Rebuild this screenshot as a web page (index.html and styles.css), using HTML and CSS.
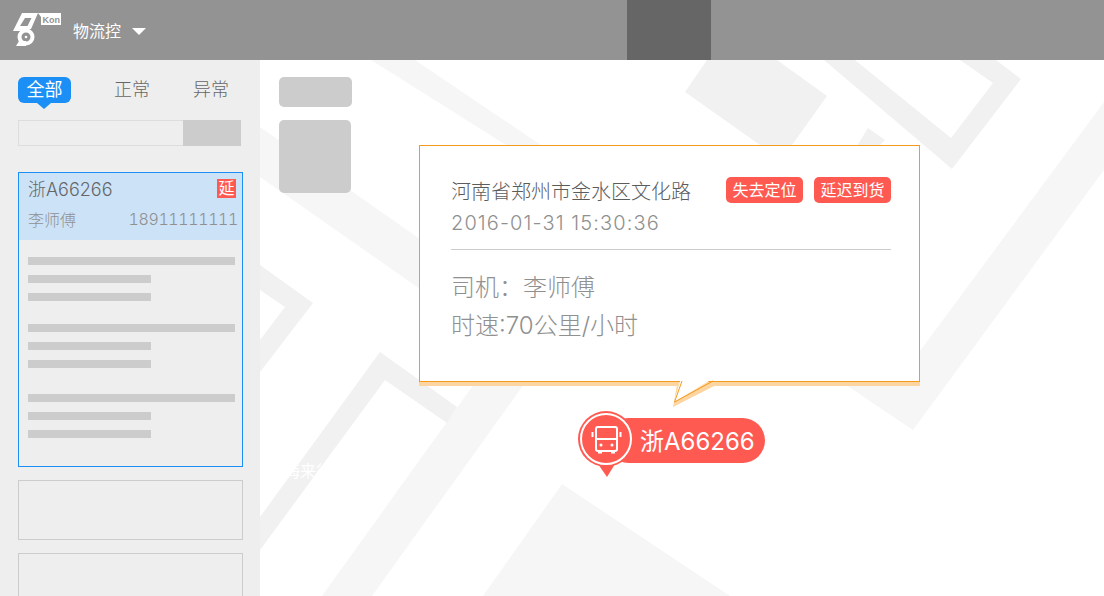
FILE: index.html
```html
<!DOCTYPE html>
<html lang="zh-CN">
<head>
  <meta charset="UTF-8">
  <title>物流控</title>
  <link rel="stylesheet" href="styles.css">
</head>
<body>
  <!-- Top bar -->
  <header class="topbar">
    <svg class="logo" viewBox="0 0 62 60" width="62" height="60">
      <path class="logo-mark" d="M22 13H38L31 29H26L31.500 18H25L20 26H28L25.500 31H13Z"/>
      <circle class="logo-ring" cx="26" cy="37" r="6.500"/>
      <circle class="logo-dot" cx="26" cy="37" r="1.300"/>
      <path class="logo-mark" d="M19 41H26V46H16Z"/>
      <path class="logo-mark" d="M38 13H61V25H41V17Z"/>
      <text class="logo-tag" x="42.500" y="22.500">Kon</text>
    </svg>
    <div class="brand">物流控</div>
    <span class="caret"></span>
    <div class="topbar-block"></div>
  </header>

  <div class="main">
    <aside class="sidebar">
      <nav class="tabs">
        <a class="tab active">全部</a>
        <a class="tab">正常</a>
        <a class="tab">异常</a>
      </nav>
      <div class="search">
        <div class="search-input"></div>
        <div class="search-btn"></div>
      </div>

      <div class="truck-card selected">
        <div class="truck-head">
          <div class="truck-row">
            <span class="plate">浙A66266</span>
            <span class="late-badge">延</span>
          </div>
          <div class="truck-row">
            <span class="driver">李师傅</span>
            <span class="phone">18911111111</span>
          </div>
        </div>
        <div class="truck-body">
          <div class="bar-group">
            <div class="bar"></div>
            <div class="bar short"></div>
            <div class="bar short"></div>
          </div>
          <div class="bar-group">
            <div class="bar"></div>
            <div class="bar short"></div>
            <div class="bar short"></div>
          </div>
          <div class="bar-group">
            <div class="bar"></div>
            <div class="bar short"></div>
            <div class="bar short"></div>
          </div>
        </div>
      </div>
      <div class="truck-card empty"></div>
      <div class="truck-card empty"></div>
    </aside>

    <section class="map">
      <!-- Map background, page coordinates -->
      <svg class="map-roads" viewBox="260 60 844 536">
        <polygon class="road-soft" points="371,60 415,60 800,320 900,384 845,384 913,430 800,330"/>
        <polygon class="road-soft" points="260,127 520,309 520,359 260,177"/>
        <polygon class="road-soft" points="477,380 527,380 372,596 322,596"/>
        <polygon class="road-soft" points="562,484 730,596 483,596"/>
        <polygon class="road-soft" points="1104,102 1104,170 913,430 845,384 900,384 920,351"/>
        <polygon class="road" points="685,92 707,60 777,60 827,96 792,145 760,145"/>
        <polygon class="road" points="824,60 855,60 951,138 993,83 960,60 996,60 1021,79 952,169"/>
        <polygon class="road" points="868,128 885,140 873,152 857,146"/>
        <polygon class="road" points="260,517 380,352 457,407 447,423 385,380 260,550"/>
        <polygon class="road" points="260,265 313,303 260,372 260,340 285,307 260,290"/>
      </svg>
      <div class="map-label">海来往</div>

      <div class="map-tools">
        <div class="tool-wide"></div>
        <div class="tool-square"></div>
      </div>

      <div class="popup">
        <div class="popup-head">
          <div class="address">河南省郑州市金水区文化路</div>
          <div class="tags">
            <span class="tag">失去定位</span>
            <span class="tag">延迟到货</span>
          </div>
        </div>
        <div class="time">2016-01-31 15:30:36</div>
        <div class="divider"></div>
        <div class="info">司机：李师傅</div>
        <div class="info">时速:70公里/小时</div>
        <svg class="popup-tail" viewBox="660 375 70 40">
          <polygon class="tail-shadow" points="677,385 673,407 716,385"/>
          <polygon class="tail-fill" points="681,378 674,402 714,378"/>
          <polyline class="tail-line" points="682,381 674.500,402 713,381"/>
        </svg>
      </div>

      <div class="marker">
        <svg class="marker-pin" viewBox="578 410 58 70" width="58" height="70">
          <circle class="pin-bg" cx="606" cy="439" r="28"/>
          <polygon class="pin-bg" points="598,464 615,464 607,477"/>
          <circle class="pin-ring" cx="606" cy="439" r="25"/>
          <rect class="bus-line" x="596" y="427" width="21" height="24" rx="2"/>
          <path class="bus-line" d="M596 439H617"/>
          <path class="bus-line" d="M592.500 432V437M620.500 432V437"/>
          <circle class="bus-fill" cx="601" cy="445" r="1.500"/>
          <circle class="bus-fill" cx="612" cy="445" r="1.500"/>
          <rect class="bus-fill" x="598" y="451" width="4" height="2.500"/>
          <rect class="bus-fill" x="611" y="451" width="4" height="2.500"/>
        </svg>
        <span class="marker-plate">浙A66266</span>
      </div>
    </section>
  </div>
</body>
</html>
```

FILE: styles.css
```css
* {
  box-sizing: border-box;
}
html, body {
  height: 100%;
}
body {
  margin: 0;
  display: flex;
  flex-direction: column;
  overflow: hidden;
  background-color: #fff;
  color: #666;
  font-family: Inter, "Noto Sans CJK SC", sans-serif;
  font-weight: 300;
}

/* top bar */
.topbar {
  display: flex;
  align-items: center;
  flex: 0 0 60px;
  background-color: #939393;
  color: #fff;
}
.logo {
  flex: none;
  margin-right: 11px;
}
.logo-mark {
  fill: #fff;
}
.logo-ring {
  fill: none;
  stroke: #fff;
  stroke-width: 4;
}
.logo-dot {
  fill: #fff;
}
.logo-tag {
  fill: #939393;
  font-family: "Liberation Sans", sans-serif;
  font-size: 9px;
  font-weight: bold;
}
.brand {
  font-size: 16px;
  font-weight: 400;
  width: 59px;
}
.caret {
  width: 0;
  height: 0;
  margin-top: 3px;
  border-left: 7px solid transparent;
  border-right: 7px solid transparent;
  border-top: 7px solid #fff;
}
.topbar-block {
  width: 84px;
  height: 60px;
  margin-left: 481px;
  background-color: #666;
}

.main {
  display: flex;
  flex: 1;
  min-height: 0;
}

/* left list */
.sidebar {
  flex: 0 0 260px;
  padding: 17px 17px 0 18px;
  overflow: hidden;
  background-color: #eee;
}
.tabs {
  display: flex;
  align-items: center;
  height: 26px;
}
.tab {
  position: relative;
  width: 53px;
  height: 26px;
  margin-right: 43px;
  font-size: 18px;
  line-height: 26px;
  text-align: center;
  border-radius: 6px;
}
.tab:nth-child(2) {
  width: 36px;
}
.tab:nth-child(3) {
  width: 36px;
  margin-right: 0;
}
.tab.active {
  background-color: #1b8ff5;
  color: #fff;
  font-weight: 400;
}
.tab.active::after {
  content: "";
  position: absolute;
  left: 19px;
  bottom: -6px;
  border-left: 7px solid transparent;
  border-right: 7px solid transparent;
  border-top: 6px solid #1b8ff5;
}
.search {
  display: flex;
  width: 223px;
  height: 26px;
  margin: 17px 0 26px;
}
.search-input {
  flex: 1;
  border: 1px solid #ddd;
  border-right: none;
}
.search-btn {
  width: 58px;
  background-color: #ccc;
}
.truck-card {
  width: 225px;
  margin-bottom: 13px;
  border: 1px solid #ccc;
}
.truck-card.selected {
  height: 295px;
  border-color: #1b8ff5;
}
.truck-card.empty {
  height: 60px;
}
.truck-head {
  height: 67px;
  padding: 4px 4px 0 9px;
  background-color: #cbe2f7;
}
.truck-row {
  display: flex;
  justify-content: space-between;
  align-items: center;
  height: 22px;
}
.truck-row + .truck-row {
  margin-top: 9px;
}
.plate {
  font-size: 18px;
}
.late-badge {
  width: 19px;
  height: 19px;
  margin-right: 2px;
  font-size: 16px;
  font-weight: 400;
  line-height: 19px;
  text-align: center;
  background-color: #ff5a52;
  color: #fff;
}
.driver {
  font-size: 16px;
  color: #909090;
}
.phone {
  font-size: 16px;
  font-variant-numeric: tabular-nums;
  letter-spacing: -0.4px;
  color: #909090;
}
.truck-body {
  padding: 17px 7px 0 9px;
}
.bar-group {
  margin-bottom: 23px;
}
.bar-group:nth-child(2) {
  margin-bottom: 26px;
}
.bar {
  height: 8px;
  margin-bottom: 10px;
  background-color: #ccc;
}
.bar.short {
  width: 123px;
}

/* map area */
.map {
  position: relative;
  flex: 1;
  overflow: hidden;
}
.map-roads {
  position: absolute;
  left: 0;
  top: 0;
  width: 844px;
  height: 536px;
}
.road {
  fill: #f1f1f1;
}
.road-soft {
  fill: #f6f6f6;
}
.map-label {
  position: absolute;
  left: 24px;
  top: 400px;
  font-size: 16px;
  font-weight: 400;
  line-height: 22px;
  color: #fff;
}
.map-tools {
  position: relative;
  padding: 17px 0 0 19px;
}
.tool-wide {
  width: 73px;
  height: 30px;
  margin-bottom: 13px;
  border-radius: 5px;
  background-color: #ccc;
}
.tool-square {
  width: 72px;
  height: 73px;
  border-radius: 5px;
  background-color: #ccc;
}

/* popup on the map */
.popup {
  position: absolute;
  left: 159px;
  top: 85px;
  width: 501px;
  height: 237px;
  padding: 31px 28px 0 31px;
  background-color: #fff;
  border: 1px solid #f39a1f;
  box-shadow: 0 4px 0 #fdd5a0;
}
.popup-head {
  display: flex;
  justify-content: space-between;
}
.address {
  font-size: 20px;
  line-height: 30px;
  color: #5c5c5c;
}
.tags {
  display: flex;
  gap: 11px;
}
.tag {
  width: 77px;
  height: 26px;
  font-size: 16px;
  font-weight: 400;
  line-height: 26px;
  text-align: center;
  border-radius: 5px;
  background-color: #ff5a52;
  color: #fff;
}
.time {
  margin-top: 1px;
  font-size: 20px;
  line-height: 30px;
  letter-spacing: 1.1px;
  color: #909090;
}
.divider {
  height: 1px;
  margin: 11px 0 19px;
  background-color: #ccc;
}
.info {
  font-size: 24px;
  line-height: 38px;
  color: #909090;
}
.popup-tail {
  position: absolute;
  left: 240px;
  top: 229px;
  width: 70px;
  height: 40px;
}
.tail-shadow {
  fill: #fdd5a0;
}
.tail-fill {
  fill: #fff;
}
.tail-line {
  fill: none;
  stroke: #f39a1f;
  stroke-width: 1;
}

/* truck marker */
.marker {
  position: absolute;
  left: 318px;
  top: 350px;
  width: 187px;
  height: 70px;
}
.marker-pin {
  position: absolute;
  left: 0;
  top: 0;
  z-index: 1;
}
.marker-plate {
  position: absolute;
  left: 28px;
  top: 8px;
  width: 159px;
  height: 45px;
  padding-left: 34px;
  font-size: 24px;
  font-weight: 400;
  line-height: 47px;
  border-radius: 23px;
  background-color: #ff5a52;
  color: #fff;
}
.pin-bg {
  fill: #ff5a52;
}
.pin-ring {
  fill: none;
  stroke: #fff;
  stroke-width: 2;
}
.bus-line {
  fill: none;
  stroke: #fff;
  stroke-width: 2;
}
.bus-fill {
  fill: #fff;
}
```
